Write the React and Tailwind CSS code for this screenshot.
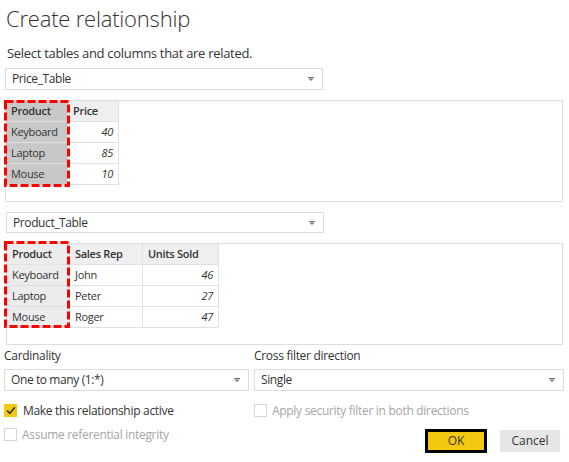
import React from "react";

function Caret() {
  return (
    <svg width="6" height="4" viewBox="0 0 6 4" className="shrink-0">
      <rect x="0" y="0" width="6" height="1" fill="#777" />
      <path d="M0.3 1.5 L5.7 1.5 L3 4 Z" fill="#777" />
    </svg>
  );
}

function Dropdown({ value, className }) {
  return (
    <div
      className={
        "flex items-center justify-between border border-[#dcdcdc] bg-white pl-[6px] pr-[8px] text-[12px] tracking-[-0.4px] text-[#333] " +
        className
      }
    >
      <span>{value}</span>
      <Caret />
    </div>
  );
}

function DashBox({ className }) {
  return (
    <svg className={"absolute pointer-events-none " + className} width="66" height="87">
      <rect
        x="1.5"
        y="1.5"
        width="63"
        height="84"
        fill="none"
        stroke="#ff0000"
        strokeWidth="3"
        strokeDasharray="8 3"
      />
    </svg>
  );
}

function Cell({ children, className }) {
  return (
    <div className={"flex items-center h-[21px] px-[5px] text-[11px] tracking-[-0.3px] text-[#333] border-r border-b border-[#e1e1e1] " + className}>
      {children}
    </div>
  );
}

export default function App() {
  const priceRows = [
    ["Keyboard", "40"],
    ["Laptop", "85"],
    ["Mouse", "10"],
  ];
  const productRows = [
    ["Keyboard", "John", "46"],
    ["Laptop", "Peter", "27"],
    ["Mouse", "Roger", "47"],
  ];

  return (
    <div className="w-[569px] h-[462px] bg-white overflow-hidden font-['Open_Sans',sans-serif] text-[#333]">
      {/* Title */}
      <div className="h-[44px] pl-[6px] pt-[1px] text-[22px] font-light leading-[34px] text-[#333] tracking-[-0.2px]">
        Create relationship
      </div>
      <div className="pl-[7px] h-[24px] text-[13px] leading-[18px] tracking-[-0.3px]">
        Select tables and columns that are related.
      </div>

      {/* First table */}
      <Dropdown value="Price_Table" className="ml-[5px] w-[318px] h-[22px]" />
      <div className="relative ml-[5px] mt-[10px] w-[558px] h-[102px] border border-[#dedede]">
        <div className="grid grid-cols-[62px_51px]">
          <Cell className="bg-[#c8c8c8] font-semibold">Product</Cell>
          <Cell className="bg-[#efefef] font-semibold">Price</Cell>
          {priceRows.map((r) => (
            <React.Fragment key={r[0]}>
              <Cell className="bg-[#c8c8c8] border-[#dcdcdc]">{r[0]}</Cell>
              <Cell className="justify-end italic">{r[1]}</Cell>
            </React.Fragment>
          ))}
        </div>
        <DashBox className="left-[-2px] top-[-1px]" />
      </div>

      {/* Second table */}
      <Dropdown value="Product_Table" className="ml-[6px] mt-[10px] w-[318px] h-[21px]" />
      <div className="relative ml-[6px] mt-[10px] w-[557px] h-[102px] border border-[#dedede]">
        <div className="grid grid-cols-[63px_73px_76px]">
          <Cell className="bg-[#ececec] font-semibold">Product</Cell>
          <Cell className="bg-[#efefef] font-semibold">Sales Rep</Cell>
          <Cell className="bg-[#efefef] font-semibold">Units Sold</Cell>
          {productRows.map((r) => (
            <React.Fragment key={r[0]}>
              <Cell className="bg-[#ececec]">{r[0]}</Cell>
              <Cell>{r[1]}</Cell>
              <Cell className="justify-end italic">{r[2]}</Cell>
            </React.Fragment>
          ))}
        </div>
        <DashBox className="left-[-3px] top-[-3px]" />
      </div>

      {/* Options */}
      <div className="grid grid-cols-[245px_310px] gap-x-[5px] pl-[4px] text-[12px] tracking-[-0.3px]">
        <div className="h-[24px] pt-[3px] leading-[16px]">Cardinality</div>
        <div className="h-[24px] pt-[3px] leading-[16px]">Cross filter direction</div>
        <Dropdown value="One to many (1:*)" className="h-[22px]" />
        <Dropdown value="Single" className="h-[22px]" />

        <div className="flex items-center gap-[6px] mt-[13px] h-[13px]">
          <div className="w-[13px] h-[13px] bg-[#f2c811] flex items-center justify-center">
            <svg width="10" height="9" viewBox="0 0 10 9">
              <path d="M1 4.5 L3.8 7.3 L9 1.3" fill="none" stroke="#333" strokeWidth="1.6" />
            </svg>
          </div>
          <span>Make this relationship active</span>
        </div>
        <div className="flex items-center gap-[5px] mt-[13px] h-[13px] text-[#a6a6a6]">
          <div className="w-[13px] h-[13px] border border-[#d6d6d6] bg-white" />
          <span>Apply security filter in both directions</span>
        </div>
      </div>

      <div className="flex items-start pl-[4px] mt-[11px]">
        <div className="flex items-center gap-[5px] h-[13px] text-[12px] text-[#a6a6a6] tracking-[-0.3px] w-[421px]">
          <div className="w-[13px] h-[13px] border border-[#d6d6d6] bg-white" />
          <span>Assume referential integrity</span>
        </div>
        <button className="mt-[1px] w-[62px] h-[24px] bg-[#f2c811] border-[3px] border-black text-[12px] text-[#333]">
          OK
        </button>
        <button className="ml-[13px] mt-[2px] w-[60px] h-[22px] bg-[#e6e6e6] text-[12px] text-[#333]">
          Cancel
        </button>
      </div>
    </div>
  );
}
